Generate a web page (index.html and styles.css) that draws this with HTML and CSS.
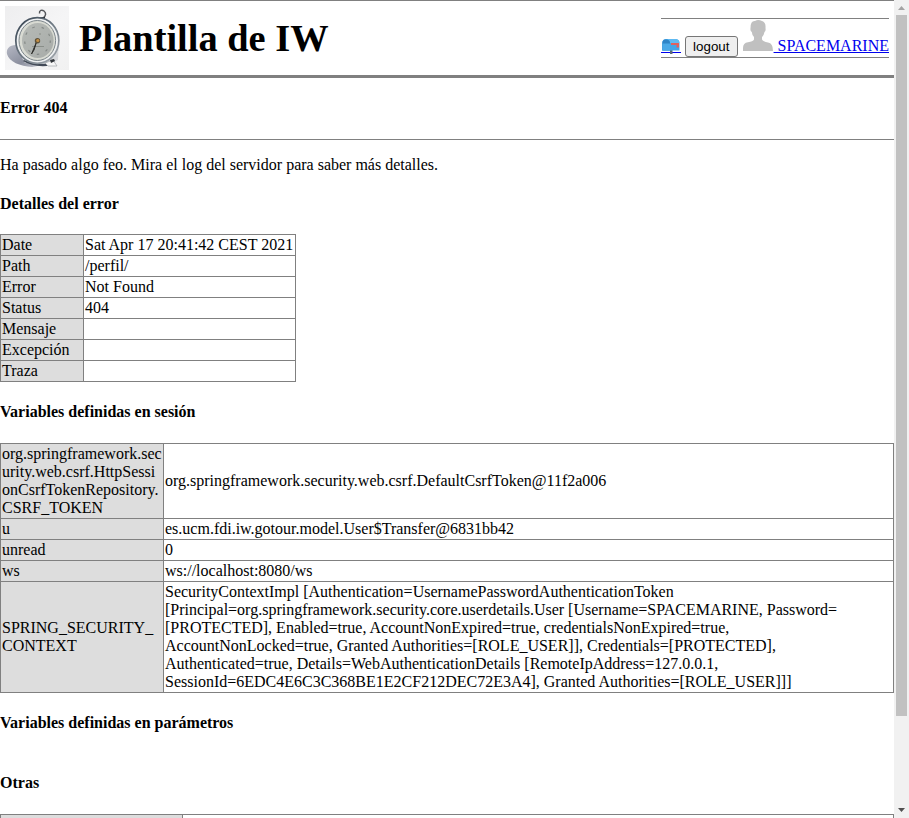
FILE: index.html
```html
<!DOCTYPE html>
<html lang="es">
<head>
<meta charset="utf-8">
<title>Plantilla de IW</title>
<link rel="stylesheet" href="styles.css">
</head>
<body>
<div class="page">
  <header class="header">
    <svg class="logo" viewBox="0 0 64 64" width="64" height="64">
      <defs>
        <linearGradient id="bg" x1="0" y1="0" x2="1" y2="1"><stop offset="0" stop-color="#eeeeef"/><stop offset=".55" stop-color="#f5f5f6"/><stop offset="1" stop-color="#f1f1f1"/></linearGradient>
        <linearGradient id="shade" x1="0" y1="0" x2="1" y2="1"><stop offset="0" stop-color="#b6b9c5"/><stop offset=".6" stop-color="#8b8f9e"/><stop offset="1" stop-color="#c8cad2"/></linearGradient>
        <linearGradient id="face" x1="0" y1="0" x2="1" y2="1"><stop offset="0" stop-color="#b6bab6"/><stop offset="1" stop-color="#a8aca9"/></linearGradient>
        <linearGradient id="rim" x1="0" y1="0" x2="1" y2="1"><stop offset="0" stop-color="#34414f"/><stop offset=".5" stop-color="#6f7a84"/><stop offset="1" stop-color="#a5abb1"/></linearGradient>
      </defs>
      <rect width="64" height="64" fill="url(#bg)"/>
      <path d="M11 39C4 39 1 43 2 48C4 56 15 60 27 61L38 59L20 50Z" fill="url(#shade)"/>
      <path d="M34.500 7.500C34 4 37 3.500 39 5C41.500 7 41 10 38 12" fill="none" stroke="#54565a" stroke-width="1.500"/>
      <path d="M35 12.500H40" stroke="#2f353b" stroke-width="3"/>
      <path d="M17 52L20 57L44 59L53 54L54 29Z" fill="#d7d9dc"/>
      <path d="M19 54Q32 60 44 57L42 60Q27 61 18 55Z" fill="#424a57"/>
      <path d="M40 57L48 54L52 60L43 60Z" fill="#f7f7f7" stroke="#9fa3a7" stroke-width=".7"/>
      <path d="M45 54L49 53L50 55L46 57Z" fill="#303439"/>
      <ellipse cx="32.300" cy="34.500" rx="21.500" ry="22.800" fill="#eef0f1" stroke="url(#rim)" stroke-width="1.700"/>
      <ellipse cx="32.300" cy="34.500" rx="18.300" ry="20" fill="#d9dbd3" stroke="#7d868b" stroke-width="1"/>
      <ellipse cx="32.800" cy="34.500" rx="15.800" ry="17.500" fill="url(#face)"/>
      <ellipse cx="32.500" cy="34.500" rx="12.800" ry="13.800" fill="none" stroke="#848986" stroke-width="1.200" stroke-dasharray="2.500 7"/>
      <path d="M27 40.500H39M34 28H36" stroke="#80857f" stroke-width=".8"/>
      <path d="M31.500 36L26.500 48L29 44Z" stroke="#30302d" stroke-width="1" fill="#444"/>
      <circle cx="32.500" cy="34.700" r="2.700" fill="#5f533a"/>
      <circle cx="32.800" cy="34.500" r="1.600" fill="#c38e45"/>
    </svg>
    <h1 class="title">Plantilla de IW</h1>
    <nav class="nav">
      <a class="mail" href="#" aria-label="Mensajes"><svg width="20" height="17" viewBox="0 0 20 17">
        <path d="M0 14.500H20" stroke="#0000ee"/>
        <path d="M9 12H11.500V16H9Z" fill="#5d6a76"/>
        <path d="M5 1H14Q18.500 1 18.500 5V12.500H1.300V5Q1.300 1 5 1" fill="#42a5e8"/>
        <path d="M5 1H14Q18 1 18.500 5H9Q8 1 5 1" fill="#60baf2"/>
        <path d="M1.300 5Q1.300 1.500 5 1.500Q9 1.500 9 5V12.500H1.300Z" fill="#2f84c6"/>
        <path d="M1.300 5.500H9V12.500H1.300Z" fill="#4ba9e7"/>
        <path d="M10 5H18V9.500H15.500V7H10Z" fill="#e0605f"/>
      </svg></a>
      <button class="logout" type="button">logout</button>
      <a class="user" href="#"><svg width="32" height="32" viewBox="0 0 32 32"><path d="M12 20.500V18Q10 16 9.800 13Q8 12 8.500 9Q8.500 1.500 13 2Q16 0 20 2Q24 3 23.500 9Q24 12 22.500 13Q22 16 20 18V20.500Q21 22.500 26 23.500Q31 24 31 32H1V29Q1 24 6 23.300Q11 22.500 12 20.500" fill="#c0c0c0"/></svg> SPACEMARINE</a>
    </nav>
  </header>
  <main>
    <h4>Error 404</h4>
    <div class="rule"></div>
    <p>Ha pasado algo feo. Mira el log del servidor para saber más detalles.</p>
    <h4>Detalles del error</h4>
    <table class="details">
      <tr><th>Date</th><td>Sat Apr 17 20:41:42 CEST 2021</td></tr>
      <tr><th>Path</th><td>/perfil/</td></tr>
      <tr><th>Error</th><td>Not Found</td></tr>
      <tr><th>Status</th><td>404</td></tr>
      <tr><th>Mensaje</th><td></td></tr>
      <tr><th>Excepción</th><td></td></tr>
      <tr><th>Traza</th><td></td></tr>
    </table>
    <h4>Variables definidas en sesión</h4>
    <table class="vars session">
      <tr><th>org.springframework.security.web.csrf.HttpSessionCsrfTokenRepository.CSRF_TOKEN</th><td>org.springframework.security.web.csrf.DefaultCsrfToken@11f2a006</td></tr>
      <tr><th>u</th><td>es.ucm.fdi.iw.gotour.model.User$Transfer@6831bb42</td></tr>
      <tr><th>unread</th><td>0</td></tr>
      <tr><th>ws</th><td>ws://localhost:8080/ws</td></tr>
      <tr><th>SPRING_SECURITY_<wbr>CONTEXT</th><td>SecurityContextImpl [Authentication=UsernamePasswordAuthenticationToken<br>[Principal=org.springframework.security.core.userdetails.User [Username=SPACEMARINE, Password=<br>[PROTECTED], Enabled=true, AccountNonExpired=true, credentialsNonExpired=true,<br>AccountNonLocked=true, Granted Authorities=[ROLE_USER]], Credentials=[PROTECTED],<br>Authenticated=true, Details=WebAuthenticationDetails [RemoteIpAddress=127.0.0.1,<br>SessionId=6EDC4E6C3C368BE1E2CF212DEC72E3A4], Granted Authorities=[ROLE_USER]]]</td></tr>
    </table>
    <h4>Variables definidas en parámetros</h4>
    <table class="empty"></table>
    <h4>Otras</h4>
    <table class="vars other"><tr><th></th><td></td></tr></table>
  </main>
</div>
<div class="scrollbar">
  <svg width="15" height="15" viewBox="0 0 15 15"><path d="M4 10L7.500 6L11 10Z" fill="#a3a3a3"/></svg>
  <div class="thumb"></div>
  <svg class="down" width="15" height="15" viewBox="0 0 15 15"><path d="M4 5L7.500 9L11 5Z" fill="#505050"/></svg>
</div>
</body>
</html>
```
FILE: styles.css
```css
* { box-sizing: border-box; }
body {
  margin: 0;
  height: 818px;
  overflow: hidden;
  display: flex;
  background: #fff;
  color: #000;
  font: 16px/18px "Liberation Serif", serif;
}
.page { width: 894px; height: 818px; overflow: hidden; }
.header {
  height: 78px;
  display: flex;
  align-items: flex-start;
  padding: 5px 5px 0;
  border-top: 1px solid gray;
  border-bottom: 3px solid gray;
}
.logo { display: block; flex: none; }
.title { margin: 10px 0 0 10px; font-size: 38.4px; line-height: 45px; white-space: nowrap; }
.nav {
  display: flex;
  align-items: flex-end;
  width: 228px;
  height: 40px;
  margin: 12px 0 0 auto;
  border-top: 1px solid gray;
  border-bottom: 1px solid gray;
  white-space: nowrap;
}
.nav a { color: #0000ee; text-decoration: underline; }
.mail { display: block; width: 20px; height: 17px; margin-bottom: 2px; }
.mail svg { display: block; }
.logout {
  width: 53px;
  height: 21px;
  margin: 0 4px 0 4px;
  padding: 0;
  border: 1px solid #767676;
  border-radius: 3px;
  background: #efefef;
  color: #000;
  font: 13.333px "Liberation Sans", sans-serif;
}
.user { height: 38px; line-height: 18px; }
.user svg { vertical-align: baseline; }
h4 { margin: 21.28px 0; font-size: 16px; line-height: 18px; }
main { display: flow-root; }
.rule { height: 1px; background: gray; }
p { margin: 16px 0 21.28px; }
table { border-collapse: collapse; border-spacing: 0; }
th, td { border: 1px solid gray; padding: 1px; height: 21px; text-align: left; vertical-align: middle; }
th { background: #ddd; font-weight: normal; overflow-wrap: anywhere; }
.details { width: 296px; table-layout: fixed; white-space: nowrap; }
.details th { width: 83px; }
.vars { width: 894px; table-layout: fixed; }
.session th { width: 163px; }
.other th { width: 182px; }
.scrollbar { display: flex; flex-direction: column; width: 15px; height: 818px; background: #f1f1f1; }
.scrollbar svg { display: block; flex: none; }
.thumb { width: 11px; height: 701px; margin-left: 2px; background: #c1c1c1; }
.down { margin-top: auto; }
```
